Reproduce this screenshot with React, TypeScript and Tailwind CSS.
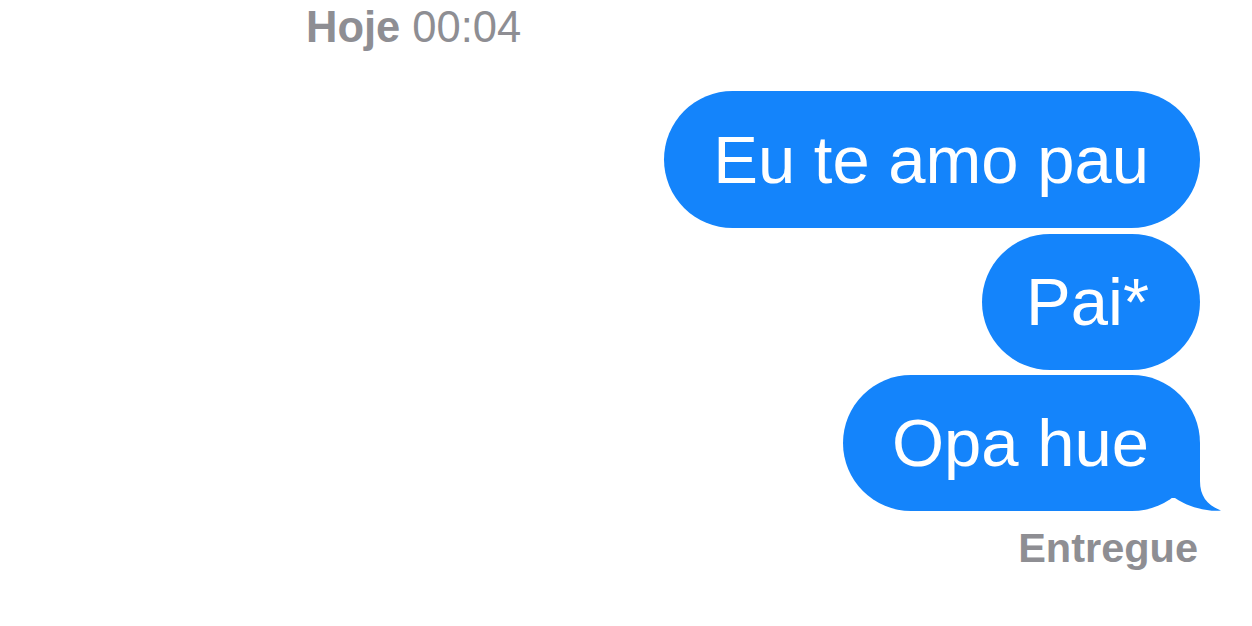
const messages = ["Eu te amo pau", "Pai*", "Opa hue"];

const Tail = () => (
  <svg
    className="absolute bottom-0 right-[-22px] h-[68px] w-[62px]"
    viewBox="0 0 62 68"
    fill="#1484fb"
  >
    <path d="M0,0 L40,0 L40,38 C40,53 47,62 61,67.5 C50,69 29,65 15,55 L0,55 Z" />
  </svg>
);

const Bubble = ({ text, tail, className }: { text: string; tail?: boolean; className?: string }) => (
  <div
    className={
      "relative flex h-[136px] items-center rounded-full bg-[#1484fb] pr-[51px] text-[67px] leading-none text-white " +
      (className ?? "")
    }
  >
    <span className="relative z-10">{text}</span>
    {tail && <Tail />}
  </div>
);

export default function App() {
  return (
    <div
      className="h-[626px] w-[1252px] overflow-hidden bg-white"
      style={{ fontFamily: '"Liberation Sans", Arial, sans-serif' }}
    >
      <div className="pl-[306px] pt-[6px] text-[43.5px] leading-none text-[#8e8e93]">
        <span className="font-bold">Hoje</span> 00:04
      </div>
      <div className="mt-[41px] flex flex-col items-end pr-[52px]">
        <Bubble text={messages[0]} className="h-[137px] pl-[49px]" />
        <Bubble text={messages[1]} className="mt-[6px] pl-[44px]" />
        <Bubble text={messages[2]} className="mt-[5px] pl-[49px]" tail />
        <div className="mr-[2px] mt-[16px] text-[41.5px] font-bold leading-none text-[#8e8e93]">
          Entregue
        </div>
      </div>
    </div>
  );
}
